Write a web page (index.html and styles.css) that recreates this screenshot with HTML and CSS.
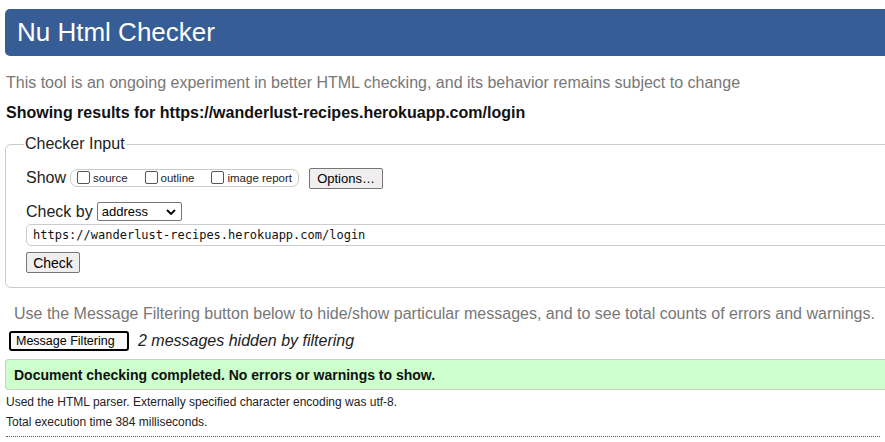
FILE: index.html
```html
<!DOCTYPE html>
<html lang="en">
<head>
<meta charset="utf-8">
<title>Nu Html Checker</title>
<link rel="stylesheet" href="styles.css">
</head>
<body>
<div class="page">
  <h1 class="header">Nu Html Checker</h1>
  <p class="intro">This tool is an ongoing experiment in better HTML checking, and its behavior remains subject to change</p>
  <p class="showing">Showing results for https://wanderlust-recipes.herokuapp.com/login</p>
  <fieldset class="checker">
    <legend class="legend">Checker Input</legend>
    <div class="row show-row">
      <span class="row-label">Show</span>
      <span class="pill">
        <label class="opt"><span class="cb"></span>source</label>
        <label class="opt"><span class="cb"></span>outline</label>
        <label class="opt"><span class="cb"></span>image report</label>
      </span>
      <span class="btn options">Options…</span>
    </div>
    <div class="row by-row">
      <span class="row-label">Check by</span>
      <span class="select">address
        <svg class="chev" width="10" height="6" viewBox="0 0 10 6"><path d="M1 1 L5 5 L9 1" fill="none" stroke="#000" stroke-width="1.8"/></svg>
      </span>
    </div>
    <div class="url">https://wanderlust-recipes.herokuapp.com/login</div>
    <span class="btn check">Check</span>
  </fieldset>
  <p class="filter-note">Use the Message Filtering button below to hide/show particular messages, and to see total counts of errors and warnings.</p>
  <div class="filter-row">
    <span class="filter-btn">Message Filtering</span>
    <em class="hidden-count">2 messages hidden by filtering</em>
  </div>
  <div class="success">Document checking completed. No errors or warnings to show.</div>
  <p class="info first">Used the HTML parser. Externally specified character encoding was utf-8.</p>
  <p class="info">Total execution time 384 milliseconds.</p>
  <hr class="dots">
</div>
</body>
</html>
```
FILE: styles.css
```css
html, body { overflow: hidden; }
body {
  margin: 0;
  font-family: "Liberation Sans", Arial, sans-serif;
  color: #222;
  background: #fff;
}
.page {
  width: 960px;
  padding-left: 5px;
  padding-top: 9px;
}
.header {
  margin: 0;
  height: 47px;
  background: #365d95;
  border-radius: 5px 0 0 5px;
  color: #fff;
  font-weight: normal;
  font-size: 26px;
  padding-left: 12px;
  display: flex;
  align-items: center;
}
.intro {
  margin: 17px 0 0 1px;
  color: #777;
  font-size: 16px;
  line-height: 20px;
}
.showing {
  margin: 10px 0 0 1px;
  font-weight: bold;
  font-size: 16px;
  line-height: 20px;
  color: #111;
}
.checker {
  margin: 12px 0 0 0;
  border: 1px solid #ccc;
  border-radius: 6px;
  padding: 0 0 14px 20px;
}
.legend {
  font-size: 16px;
  padding: 0 1px;
  margin-left: -2px;
  color: #222;
}
.row {
  display: flex;
  align-items: center;
}
.show-row { margin-top: 14px; height: 22px; }
.row-label { font-size: 16px; margin-right: 4px; }
.pill {
  display: flex;
  align-items: center;
  height: 18px;
  border: 1px solid #ccc;
  border-radius: 7px;
  padding: 0 6px 0 6px;
  width: 229px;
  box-sizing: border-box;
  justify-content: space-between;
}
.opt {
  display: flex;
  align-items: center;
  font-size: 11.5px;
  color: #222;
}
.cb {
  width: 11px;
  height: 11px;
  border: 1px solid #555;
  border-radius: 2px;
  margin-right: 3px;
  position: relative;
  top: -1px;
}
.btn {
  display: inline-flex;
  align-items: center;
  justify-content: center;
  background: #efefef;
  border: 1px solid #767676;
  border-radius: 2px;
  font-size: 13px;
  color: #000;
  box-sizing: border-box;
}
.options { margin-left: 10px; width: 74px; height: 21px; }
.by-row { margin-top: 13px; height: 19px; }
.select {
  display: inline-flex;
  align-items: center;
  justify-content: space-between;
  width: 85px;
  height: 19px;
  box-sizing: border-box;
  border: 1px solid #767676;
  border-radius: 2px;
  padding: 0 5px 0 4px;
  font-size: 13px;
  color: #000;
}
.url {
  margin-top: 3px;
  margin-right: -30px;
  height: 22px;
  box-sizing: border-box;
  border: 1px solid #ccc;
  border-radius: 5px;
  padding-left: 6px;
  display: flex;
  align-items: center;
  font-family: "DejaVu Sans Mono", "Liberation Mono", monospace;
  font-size: 12px;
  color: #111;
}
.check { margin-top: 6px; width: 54px; height: 21px; font-size: 14px; }
.filter-note {
  margin: 16px 0 0 9px;
  color: #777;
  font-size: 16px;
  line-height: 20px;
}
.filter-row {
  display: flex;
  align-items: center;
  margin-top: 7px;
  margin-left: 4px;
  height: 20px;
}
.filter-btn {
  display: inline-flex;
  align-items: center;
  height: 20px;
  box-sizing: border-box;
  border: 2px solid #000;
  border-radius: 3px;
  background: #f8f8f8;
  padding: 0 5px;
  font-size: 12.5px;
  color: #000;
  width: 120px;
}
.hidden-count { margin-left: 9px; font-size: 16px; color: #222; }
.success {
  margin-top: 8px;
  height: 31px;
  box-sizing: border-box;
  background: #ccffcc;
  border: 1px solid #ccc;
  border-right: 0;
  border-radius: 4px 0 0 4px;
  padding-left: 8px;
  display: flex;
  align-items: center;
  font-weight: bold;
  font-size: 14px;
  color: #111;
}
.info {
  margin: 0 0 0 1px;
  font-size: 12px;
  line-height: 20px;
  color: #222;
}
.info.first { margin-top: 2px; }
.dots {
  margin: 4px 0 0 1px;
  width: 874px;
  border: 0;
  border-top: 1px dotted #555;
}
```
